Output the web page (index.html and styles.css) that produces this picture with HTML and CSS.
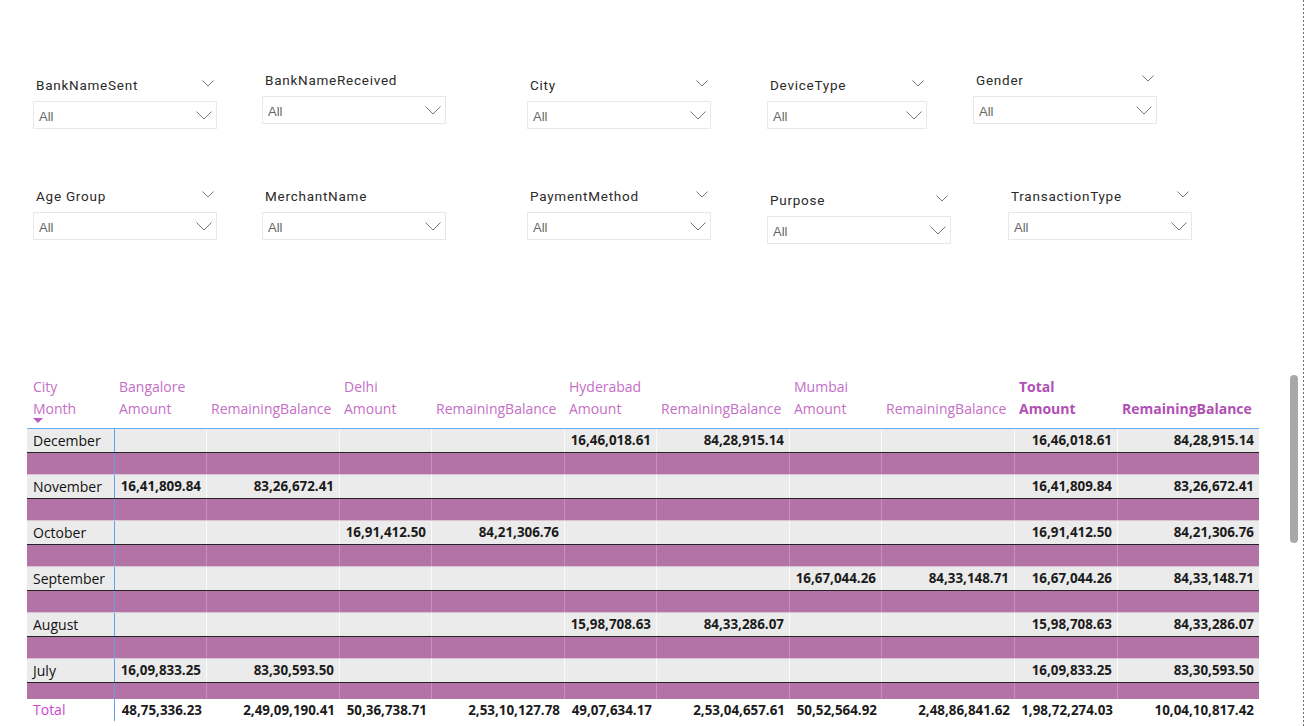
FILE: index.html
```html
<!DOCTYPE html>
<html>
<head>
<meta charset="utf-8">
<link rel="stylesheet" href="styles.css">
</head>
<body>
<div class="page">
  <div class="slicer-row r1">
    <div class="slicer w184 ml33">
      <div class="s-head"><span>BankNameSent</span><svg class="hchev" width="12" height="7" viewBox="0 0 12 7"><polyline points="0.5,0.5 6,6 11.5,0.5"/></svg></div>
      <div class="s-box"><span>All</span><svg class="bchev" width="16" height="9" viewBox="0 0 16 9"><polyline points="0.5,0.5 8,8 15.5,0.5"/></svg></div>
    </div>
    <div class="slicer w184 ml45 up">
      <div class="s-head"><span>BankNameReceived</span></div>
      <div class="s-box"><span>All</span><svg class="bchev" width="16" height="9" viewBox="0 0 16 9"><polyline points="0.5,0.5 8,8 15.5,0.5"/></svg></div>
    </div>
    <div class="slicer w184 ml81">
      <div class="s-head"><span>City</span><svg class="hchev" width="12" height="7" viewBox="0 0 12 7"><polyline points="0.5,0.5 6,6 11.5,0.5"/></svg></div>
      <div class="s-box"><span>All</span><svg class="bchev" width="16" height="9" viewBox="0 0 16 9"><polyline points="0.5,0.5 8,8 15.5,0.5"/></svg></div>
    </div>
    <div class="slicer w160 ml56">
      <div class="s-head"><span>DeviceType</span><svg class="hchev" width="12" height="7" viewBox="0 0 12 7"><polyline points="0.5,0.5 6,6 11.5,0.5"/></svg></div>
      <div class="s-box"><span>All</span><svg class="bchev" width="16" height="9" viewBox="0 0 16 9"><polyline points="0.5,0.5 8,8 15.5,0.5"/></svg></div>
    </div>
    <div class="slicer w184 ml46 up">
      <div class="s-head"><span>Gender</span><svg class="hchev" width="12" height="7" viewBox="0 0 12 7"><polyline points="0.5,0.5 6,6 11.5,0.5"/></svg></div>
      <div class="s-box"><span>All</span><svg class="bchev" width="16" height="9" viewBox="0 0 16 9"><polyline points="0.5,0.5 8,8 15.5,0.5"/></svg></div>
    </div>
  </div>

  <div class="slicer-row r2">
    <div class="slicer w184 ml33">
      <div class="s-head"><span>Age Group</span><svg class="hchev" width="12" height="7" viewBox="0 0 12 7"><polyline points="0.5,0.5 6,6 11.5,0.5"/></svg></div>
      <div class="s-box"><span>All</span><svg class="bchev" width="16" height="9" viewBox="0 0 16 9"><polyline points="0.5,0.5 8,8 15.5,0.5"/></svg></div>
    </div>
    <div class="slicer w184 ml45">
      <div class="s-head"><span>MerchantName</span></div>
      <div class="s-box"><span>All</span><svg class="bchev" width="16" height="9" viewBox="0 0 16 9"><polyline points="0.5,0.5 8,8 15.5,0.5"/></svg></div>
    </div>
    <div class="slicer w184 ml81">
      <div class="s-head"><span>PaymentMethod</span><svg class="hchev" width="12" height="7" viewBox="0 0 12 7"><polyline points="0.5,0.5 6,6 11.5,0.5"/></svg></div>
      <div class="s-box"><span>All</span><svg class="bchev" width="16" height="9" viewBox="0 0 16 9"><polyline points="0.5,0.5 8,8 15.5,0.5"/></svg></div>
    </div>
    <div class="slicer w184 ml56 down">
      <div class="s-head"><span>Purpose</span><svg class="hchev" width="12" height="7" viewBox="0 0 12 7"><polyline points="0.5,0.5 6,6 11.5,0.5"/></svg></div>
      <div class="s-box"><span>All</span><svg class="bchev" width="16" height="9" viewBox="0 0 16 9"><polyline points="0.5,0.5 8,8 15.5,0.5"/></svg></div>
    </div>
    <div class="slicer w184 ml57">
      <div class="s-head"><span>TransactionType</span><svg class="hchev" width="12" height="7" viewBox="0 0 12 7"><polyline points="0.5,0.5 6,6 11.5,0.5"/></svg></div>
      <div class="s-box"><span>All</span><svg class="bchev" width="16" height="9" viewBox="0 0 16 9"><polyline points="0.5,0.5 8,8 15.5,0.5"/></svg></div>
    </div>
  </div>

  <div class="matrix-wrap">
    <div class="matrix">
      <div class="mrow head">
        <div class="c c0"><div>City</div><div>Month</div><div class="sort"></div></div>
        <div class="c"><div>Bangalore</div><div>Amount</div></div>
        <div class="c"><div>&nbsp;</div><div>RemainingBalance</div></div>
        <div class="c"><div>Delhi</div><div>Amount</div></div>
        <div class="c"><div>&nbsp;</div><div>RemainingBalance</div></div>
        <div class="c"><div>Hyderabad</div><div>Amount</div></div>
        <div class="c"><div>&nbsp;</div><div>RemainingBalance</div></div>
        <div class="c"><div>Mumbai</div><div>Amount</div></div>
        <div class="c"><div>&nbsp;</div><div>RemainingBalance</div></div>
        <div class="c tot"><div>Total</div><div>Amount</div></div>
        <div class="c tot"><div>&nbsp;</div><div>RemainingBalance</div></div>
      </div>

      <div class="mrow data">
        <div class="c c0">December</div><div class="c"></div><div class="c"></div><div class="c"></div><div class="c"></div>
        <div class="c">16,46,018.61</div><div class="c">84,28,915.14</div><div class="c"></div><div class="c"></div>
        <div class="c">16,46,018.61</div><div class="c">84,28,915.14</div>
      </div>
      <div class="mrow band"><div class="c c0"></div><div class="c"></div><div class="c"></div><div class="c"></div><div class="c"></div><div class="c"></div><div class="c"></div><div class="c"></div><div class="c"></div><div class="c"></div><div class="c"></div></div>

      <div class="mrow data">
        <div class="c c0">November</div><div class="c">16,41,809.84</div><div class="c">83,26,672.41</div><div class="c"></div><div class="c"></div>
        <div class="c"></div><div class="c"></div><div class="c"></div><div class="c"></div>
        <div class="c">16,41,809.84</div><div class="c">83,26,672.41</div>
      </div>
      <div class="mrow band"><div class="c c0"></div><div class="c"></div><div class="c"></div><div class="c"></div><div class="c"></div><div class="c"></div><div class="c"></div><div class="c"></div><div class="c"></div><div class="c"></div><div class="c"></div></div>

      <div class="mrow data">
        <div class="c c0">October</div><div class="c"></div><div class="c"></div><div class="c">16,91,412.50</div><div class="c">84,21,306.76</div>
        <div class="c"></div><div class="c"></div><div class="c"></div><div class="c"></div>
        <div class="c">16,91,412.50</div><div class="c">84,21,306.76</div>
      </div>
      <div class="mrow band"><div class="c c0"></div><div class="c"></div><div class="c"></div><div class="c"></div><div class="c"></div><div class="c"></div><div class="c"></div><div class="c"></div><div class="c"></div><div class="c"></div><div class="c"></div></div>

      <div class="mrow data">
        <div class="c c0">September</div><div class="c"></div><div class="c"></div><div class="c"></div><div class="c"></div>
        <div class="c"></div><div class="c"></div><div class="c">16,67,044.26</div><div class="c">84,33,148.71</div>
        <div class="c">16,67,044.26</div><div class="c">84,33,148.71</div>
      </div>
      <div class="mrow band"><div class="c c0"></div><div class="c"></div><div class="c"></div><div class="c"></div><div class="c"></div><div class="c"></div><div class="c"></div><div class="c"></div><div class="c"></div><div class="c"></div><div class="c"></div></div>

      <div class="mrow data">
        <div class="c c0">August</div><div class="c"></div><div class="c"></div><div class="c"></div><div class="c"></div>
        <div class="c">15,98,708.63</div><div class="c">84,33,286.07</div><div class="c"></div><div class="c"></div>
        <div class="c">15,98,708.63</div><div class="c">84,33,286.07</div>
      </div>
      <div class="mrow band"><div class="c c0"></div><div class="c"></div><div class="c"></div><div class="c"></div><div class="c"></div><div class="c"></div><div class="c"></div><div class="c"></div><div class="c"></div><div class="c"></div><div class="c"></div></div>

      <div class="mrow data">
        <div class="c c0">July</div><div class="c">16,09,833.25</div><div class="c">83,30,593.50</div><div class="c"></div><div class="c"></div>
        <div class="c"></div><div class="c"></div><div class="c"></div><div class="c"></div>
        <div class="c">16,09,833.25</div><div class="c">83,30,593.50</div>
      </div>
      <div class="mrow band last"><div class="c c0"></div><div class="c"></div><div class="c"></div><div class="c"></div><div class="c"></div><div class="c"></div><div class="c"></div><div class="c"></div><div class="c"></div><div class="c"></div><div class="c"></div></div>

      <div class="mrow total">
        <div class="c c0">Total</div><div class="c">48,75,336.23</div><div class="c">2,49,09,190.41</div><div class="c">50,36,738.71</div><div class="c">2,53,10,127.78</div>
        <div class="c">49,07,634.17</div><div class="c">2,53,04,657.61</div><div class="c">50,52,564.92</div><div class="c">2,48,86,841.62</div>
        <div class="c">1,98,72,274.03</div><div class="c">10,04,10,817.42</div>
      </div>
    </div>
    <div class="scroll-thumb"></div>
  </div>
</div>
</body>
</html>
```

FILE: styles.css
```css
* { box-sizing: border-box; }
html, body { margin: 0; padding: 0; background: #fff; }
body { width: 1305px; height: 726px; overflow: hidden; }

.page {
  width: 1305px;
  height: 726px;
  overflow: hidden;
  background-image: repeating-linear-gradient(to bottom, #6e6e6e 0 2px, transparent 2px 4px);
  background-size: 1px 100%;
  background-position: 1303px 0;
  background-repeat: no-repeat;
}

/* ---------- slicers ---------- */
.slicer-row { display: flex; align-items: flex-start; height: 55px; }
.slicer-row.r1 { margin-top: 74px; }
.slicer-row.r2 { margin-top: 56px; }

.slicer { flex: none; }
.slicer.up { margin-top: -5px; }
.slicer.down { margin-top: 4px; }
.w184 { width: 184px; }
.w160 { width: 160px; }
.ml33 { margin-left: 33px; }
.ml45 { margin-left: 45px; }
.ml46 { margin-left: 46px; }
.ml56 { margin-left: 56px; }
.ml57 { margin-left: 57px; }
.ml81 { margin-left: 81px; }

.s-head {
  height: 22px;
  display: flex;
  align-items: center;
  justify-content: space-between;
  padding: 0 3px 0 3px;
  font-family: "Roboto", "DejaVu Sans", sans-serif;
  font-size: 13.5px;
  letter-spacing: 0.75px;
  color: #2b2a29;
}
.hchev { margin-top: -4px; }
.hchev polyline, .bchev polyline { fill: none; stroke: #777; stroke-width: 1; }

.s-box {
  margin-top: 5px;
  height: 28px;
  border: 1px solid #e8e8e8;
  display: flex;
  align-items: center;
  justify-content: space-between;
  padding: 2px 4px 0 5px;
  font-family: "Liberation Sans", Arial, sans-serif;
  font-size: 13px;
  color: #666;
}
.bchev { margin-top: -2px; }

/* ---------- matrix ---------- */
.matrix-wrap {
  display: flex;
  align-items: flex-start;
  margin-top: 136px;
  margin-left: 27px;
}
.matrix { width: 1232px; flex: none; font-family: "Open Sans", "Noto Sans", sans-serif; }
.scroll-thumb {
  flex: none;
  width: 8px;
  height: 168px;
  margin-left: 31px;
  margin-top: -1px;
  background: #a8a8a8;
  border-radius: 4px;
}

.mrow {
  display: grid;
  grid-template-columns: 88px 92px 133px 92px 133px 92px 133px 92px 133px 103px 141px;
}
.c { min-width: 0; white-space: nowrap; overflow: hidden; }

.mrow.head {
  height: 53px;
  border-bottom: 1px solid #67aef2;
  font-size: 14px;
  line-height: 22px;
  color: #c46fc6;
}
.mrow.head .c { padding-left: 4px; }
.mrow.head .c.c0 { padding-left: 6px; }
.mrow.head .c.tot { font-weight: 700; color: #b14fb4; }
.sort {
  width: 0; height: 0;
  margin-top: -2px;
  border-left: 5px solid transparent;
  border-right: 5px solid transparent;
  border-top: 5px solid #b95dbf;
}

.mrow.data {
  height: 24px;
  background: #ebebeb;
  border-bottom: 1px solid #252525;
}
.mrow.data .c {
  border-right: 1px solid #fafafa;
  text-align: right;
  padding-right: 5px;
  font-size: 13.4px;
  font-weight: 700;
  line-height: 23px;
  color: #1b1b1b;
}
.mrow.data .c.c0 {
  border-right: 1px solid #5ea2ea;
  text-align: left;
  padding-left: 6px;
  font-size: 14px;
  font-weight: 400;
  color: #111;
}
.mrow.data .c:last-child { border-right: none; }

.mrow.band {
  height: 22px;
  background: #b473a7;
  border-bottom: 1px solid #d9c4d4;
}
.mrow.band .c { border-right: 1px solid #c592bb; }
.mrow.band .c.c0 { border-right: 1px solid #5ea2ea; }
.mrow.band .c:last-child { border-right: none; }
.mrow.band.last { height: 16px; border-bottom: none; }

.mrow.total { height: 22px; }
.mrow.total .c {
  text-align: right;
  padding-right: 5px;
  font-size: 13.4px;
  font-weight: 700;
  line-height: 22px;
  color: #1b1b1b;
}
.mrow.total .c.c0 {
  border-right: 1px solid #5ea2ea;
  text-align: left;
  padding-left: 6px;
  font-size: 14px;
  font-weight: 400;
  color: #d045d2;
}
```
